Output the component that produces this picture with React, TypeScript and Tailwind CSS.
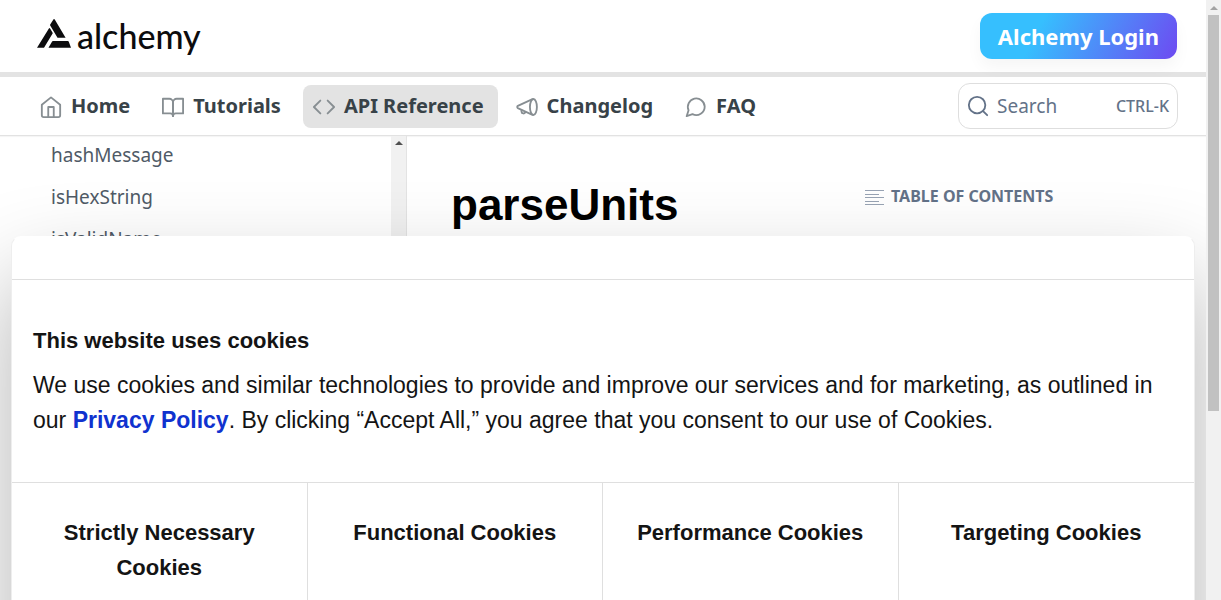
import type { ReactNode } from "react";

function Icon({ children, className }: { children: ReactNode; className: string }) {
  return (
    <svg
      viewBox="0 0 24 24"
      fill="none"
      stroke="currentColor"
      strokeWidth="2"
      strokeLinecap="round"
      strokeLinejoin="round"
      aria-hidden="true"
      className={className}
    >
      {children}
    </svg>
  );
}

const navItems: { label: string; active?: boolean; icon: ReactNode }[] = [
  {
    label: "Home",
    icon: (
      <>
        <path d="M2 9.500 12 1.500l10 8V21a2 2 0 0 1-2 2H4a2 2 0 0 1-2-2Z" />
        <path d="M9 23V12h6v11" />
      </>
    ),
  },
  {
    label: "Tutorials",
    icon: (
      <>
        <path d="M1 3h7a4 4 0 0 1 4 4v15a3 3 0 0 0-3-3H1Z" />
        <path d="M23 3h-7a4 4 0 0 0-4 4v15a3 3 0 0 1 3-3h8Z" />
      </>
    ),
  },
  {
    label: "API Reference",
    active: true,
    icon: (
      <>
        <path d="m16 19 7-7-7-7" />
        <path d="m8 5-7 7 7 7" />
      </>
    ),
  },
  {
    label: "Changelog",
    icon: (
      <>
        <ellipse cx="19" cy="12" rx="3.800" ry="8.700" />
        <path d="M18 3.500 2 10.800a1.400 1.400 0 0 0 0 2.400l16 7.300" />
        <path d="M6 15.500v1.500a2.200 2.200 0 0 0 4.300.5" />
      </>
    ),
  },
  {
    label: "FAQ",
    icon: (
      <path d="M21.500 11.500a9.200 9.200 0 0 1-13.300 8.300L1.800 22l2.100-6.400A9.200 9.200 0 1 1 21.500 11.500Z" />
    ),
  },
];

const cookieTypes = [
  "Strictly Necessary Cookies",
  "Functional Cookies",
  "Performance Cookies",
  "Targeting Cookies",
];

function Logo() {
  return (
    <a href="#home" aria-label="alchemy" className="flex items-center gap-1.5 text-[#0c0c0e]">
      <svg viewBox="0 0 34 30" className="mb-1 h-[30px] w-[34px]" fill="currentColor" aria-hidden="true">
        <path d="M16.200.8a1 1 0 0 1 1.700 0L28.600 18.700H20.500L13.200 6.600a1 1 0 0 1 0-1Z" />
        <path d="M11.900 9.600a.7.7 0 0 1 1.200 0l2.500 4.100a.9.9 0 0 1 0 .9L7 28.800H0Z" />
        <path d="M15.100 22.500a1 1 0 0 1 .9-.5h14.800a1 1 0 0 1 .9.500L34 28.800H11.500Z" />
      </svg>
      <span className="font-['Lato',sans-serif] text-[34px] leading-10 font-medium">alchemy</span>
    </a>
  );
}

function Header() {
  return (
    <header>
      <div className="flex h-[77px] items-center justify-between border-b-[5px] border-[#e3e3e3] pr-[29px] pl-[37px]">
        <Logo />
        <button className="h-[46px] rounded-xl bg-[linear-gradient(117deg,#36bffe_30%,#6b4ff2_97%)] px-[18px] text-[22px] font-bold text-white shadow-[0_8px_16px_rgba(0,0,0,0.04)]">
          Alchemy Login
        </button>
      </div>
      <div className="flex h-[59px] items-center justify-between border-b border-[#e2e2e2] pr-7 pl-[30px] shadow-[0_1px_1px_rgba(0,0,0,0.04)]">
        <nav className="flex items-center gap-2">
          {navItems.map((item) => (
            <a
              key={item.label}
              href={"#" + item.label}
              className={
                "flex h-[43px] items-center gap-[9px] rounded-lg pr-[14px] pl-[10px] text-xl font-bold text-[#384248] " +
                (item.active ? "bg-[#e3e3e3]" : "")
              }
            >
              <Icon className="mt-0.5 size-[22px] text-[#878e92]">{item.icon}</Icon>
              {item.label}
            </a>
          ))}
        </nav>
        <button className="flex h-[46px] w-[220px] items-center rounded-xl border border-[#dedede] px-2 text-[#637288]">
          <Icon className="mr-2 size-[22px]">
            <circle cx="11" cy="11" r="9" />
            <path d="m17.500 17.500 4.500 4.500" />
          </Icon>
          <span className="text-[19px]">Search</span>
          <span className="ml-auto text-base font-medium">CTRL-K</span>
        </button>
      </div>
    </header>
  );
}

function Sidebar() {
  return (
    <aside className="flex w-[407px] shrink-0 border-r border-[#e3e3e3]">
      <ul className="flex-1 pl-[51px] text-[19px] leading-[42px] text-[#4f5a66]">
        {["hashMessage", "isHexString", "isValidName"].map((name) => (
          <li key={name} className="-mt-0.5 mb-0.5">
            <a href={"#" + name}>{name}</a>
          </li>
        ))}
      </ul>
      <div className="flex w-[15px] justify-center bg-[#f1f1f1] pt-[5px]">
        <svg viewBox="0 0 8 4" className="h-1 w-2" fill="#505050" aria-hidden="true">
          <path d="M4 0 8 4H0Z" />
        </svg>
      </div>
    </aside>
  );
}

function CookieDialog() {
  return (
    <section
      aria-label="Cookie consent"
      className="absolute inset-x-[11px] top-[236px] h-[700px] rounded-[10px] border border-[#eeeeee] border-t-white bg-white font-['Liberation_Sans',sans-serif] text-[#141414] shadow-[0_44px_94px_rgba(0,0,0,0.3)]"
    >
      <div className="h-[43px] border-b border-[#dfdfdf]" />
      <div className="h-[203px] border-b border-[#dfdfdf] px-[21px] pt-[43px]">
        <h2 className="text-[22px] leading-[35px] font-bold">This website uses cookies</h2>
        <p className="mt-[10px] text-[23px] leading-[35px]">
          We use cookies and similar technologies to provide and improve our services and for marketing, as outlined in
          our{" "}
          <a href="#privacy" className="font-bold text-[#1032cf]">
            Privacy Policy
          </a>
          . By clicking “Accept All,” you agree that you consent to our use of Cookies.
        </p>
      </div>
      <div className="grid h-full grid-cols-4 divide-x divide-[#dfdfdf]">
        {cookieTypes.map((type) => (
          <div key={type} className="px-8 pt-8 text-center text-[22px] leading-[35px] font-bold">
            {type}
          </div>
        ))}
      </div>
    </section>
  );
}

export default function App() {
  return (
    <div className="flex h-screen overflow-hidden bg-white font-['Noto_Sans',sans-serif]">
      <div className="relative flex min-w-0 flex-1 flex-col overflow-hidden">
        <Header />
        <div className="flex flex-1">
          <Sidebar />
          <main className="flex flex-1 pl-11">
            <h1 className="w-[414px] pt-[43px] font-['Liberation_Sans',sans-serif] text-[44px] leading-[52px] font-bold text-black">
              parseUnits
            </h1>
            <div className="flex h-6 gap-[7px] pt-12 text-base font-bold text-[#637288]">
              <svg viewBox="0 0 19 16" className="mt-[6px] h-4 w-[19px]" stroke="#98a3b4" aria-hidden="true">
                <path d="M0 .5h19M0 4.500h14M0 7.500h19M0 11.500h14M0 14.500h19" />
              </svg>
              <span>TABLE OF CONTENTS</span>
            </div>
          </main>
        </div>
        <CookieDialog />
      </div>
      <div className="flex w-[15px] shrink-0 flex-col items-center bg-[#f1f1f1]">
        <svg viewBox="0 0 8 4" className="mt-1.5 mb-[5px] h-1 w-2" fill="#a3a3a3" aria-hidden="true">
          <path d="M4 0 8 4H0Z" />
        </svg>
        <div className="h-[66%] w-[11px] bg-[#c1c1c1]" />
      </div>
    </div>
  );
}
